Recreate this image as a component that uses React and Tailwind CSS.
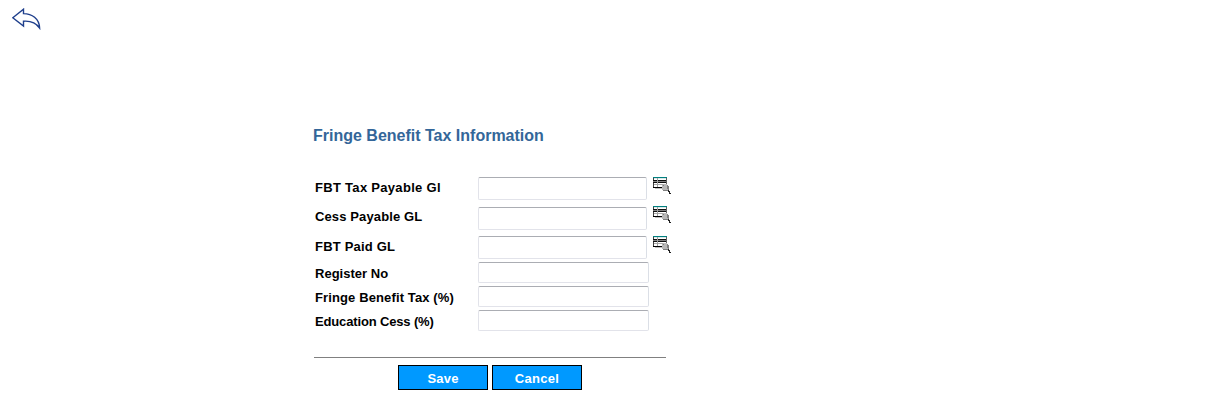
function BackArrow() {
  return (
    <svg className="block" width="30" height="22" viewBox="0 0 30 22" fill="none" stroke="#1f3f8c" strokeWidth="1.4">
      <path d="M0.8 9.7 L11.5 1.2 V5.6 C20 5.8 27.2 10.5 27.6 20 C24 14.8 19 12.6 11.5 13.2 V18 Z" />
    </svg>
  );
}

function LookupIcon() {
  return (
    <svg className="block" width="18" height="18" viewBox="0 0 18 18" shapeRendering="crispEdges">
      <rect x="0" y="0" width="14" height="11" fill="#ffffff" />
      <rect x="0" y="0" width="14" height="1" fill="#008080" />
      <rect x="0" y="1" width="1" height="10" fill="#404040" />
      <rect x="1" y="1" width="13" height="1" fill="#d8e8e8" />
      <rect x="0" y="3" width="14" height="1" fill="#101010" />
      <rect x="0" y="4" width="14" height="1" fill="#808080" />
      <rect x="0" y="5" width="14" height="1" fill="#101010" />
      <rect x="1" y="7" width="13" height="1" fill="#a8a8a8" />
      <rect x="0" y="10" width="10" height="1" fill="#000000" />
      <rect x="2" y="11" width="7" height="1" fill="#c0c0c0" />
      <rect x="4" y="1" width="1" height="9" fill="#a0a0a0" />
      <rect x="13" y="1" width="1" height="7" fill="#606060" />
      <path d="M10 7H14V8H15V9H16V13H15V14H10V13H9V8H10Z" fill="#b8b8b8" />
      <path d="M10 8H11V9H10ZM14 8H15V9H16V13H15V12H14ZM10 13H15V14H10Z" fill="#808080" />
      <path d="M15 13H16V14H17V16H18V17H16V15H15Z" fill="#202020" />
    </svg>
  );
}

const lookupFields = [
  { label: "FBT Tax Payable Gl", row: "h-[30px]", text: "pt-[3px] tracking-[0.3px]", icon: "ml-[6px]" },
  { label: "Cess Payable GL", row: "h-[29px]", text: "pt-[2px] tracking-[0.12px]", icon: "-mt-px ml-[6px]" },
  { label: "FBT Paid GL", row: "h-[26px]", text: "pt-[3px] tracking-[0.2px]", icon: "ml-[6px]" },
];
const plainFields = [
  { label: "Register No", text: "tracking-[0.02px]" },
  { label: "Fringe Benefit Tax (%)", text: "tracking-[0.12px]" },
  { label: "Education Cess (%)", text: "tracking-[-0.15px]" },
];

const inputStyle = "block shrink-0 rounded-[2px] border border-[#e2e3ea] border-t-[#abadb3] border-r-[#dbdfe6] bg-white outline-none";
const labelStyle = "w-[163px] shrink-0 whitespace-nowrap text-[13px] leading-[15px] font-bold text-black";
const buttonStyle = "h-[25px] w-[90px] border border-black bg-[#0099ff] pt-[2px] text-[13px] leading-[15px] font-bold text-white";

export default function App() {
  return (
    <main className="h-[408px] w-full overflow-hidden bg-white font-['Liberation_Sans',Arial,sans-serif]">
      <header className="h-[126px] pt-2 pl-3">
        <a href="#" aria-label="Back" className="block w-[30px]"><BackArrow /></a>
      </header>
      <form className="ml-[314px] w-[352px]" onSubmit={(e) => e.preventDefault()}>
        <h1 className="-ml-px h-[51px] whitespace-nowrap text-[16px] leading-[20px] font-bold text-[#336699]">Fringe Benefit Tax Information</h1>
        <div className="ml-px">
          {lookupFields.map((f) => (
            <div key={f.label} className={`flex items-start ${f.row}`}>
              <label className={`${labelStyle} ${f.text}`}>{f.label}</label>
              <input aria-label={f.label} className={`${inputStyle} h-[23px] w-[169px]`} />
              <span className={`shrink-0 ${f.icon}`}><LookupIcon /></span>
            </div>
          ))}
          {plainFields.map((f) => (
            <div key={f.label} className="flex h-6 items-start">
              <label className={`${labelStyle} pt-[4px] ${f.text}`}>{f.label}</label>
              <input aria-label={f.label} className={`${inputStyle} h-[21px] w-[171px]`} />
            </div>
          ))}
        </div>
        <div className="mt-[23px] h-px bg-[#808080]" />
        <div className="mt-[7px] flex justify-center gap-1">
          <button className={`${buttonStyle} tracking-[0.2px]`}>Save</button>
          <button className={`${buttonStyle} tracking-[0.3px]`}>Cancel</button>
        </div>
      </form>
    </main>
  );
}
